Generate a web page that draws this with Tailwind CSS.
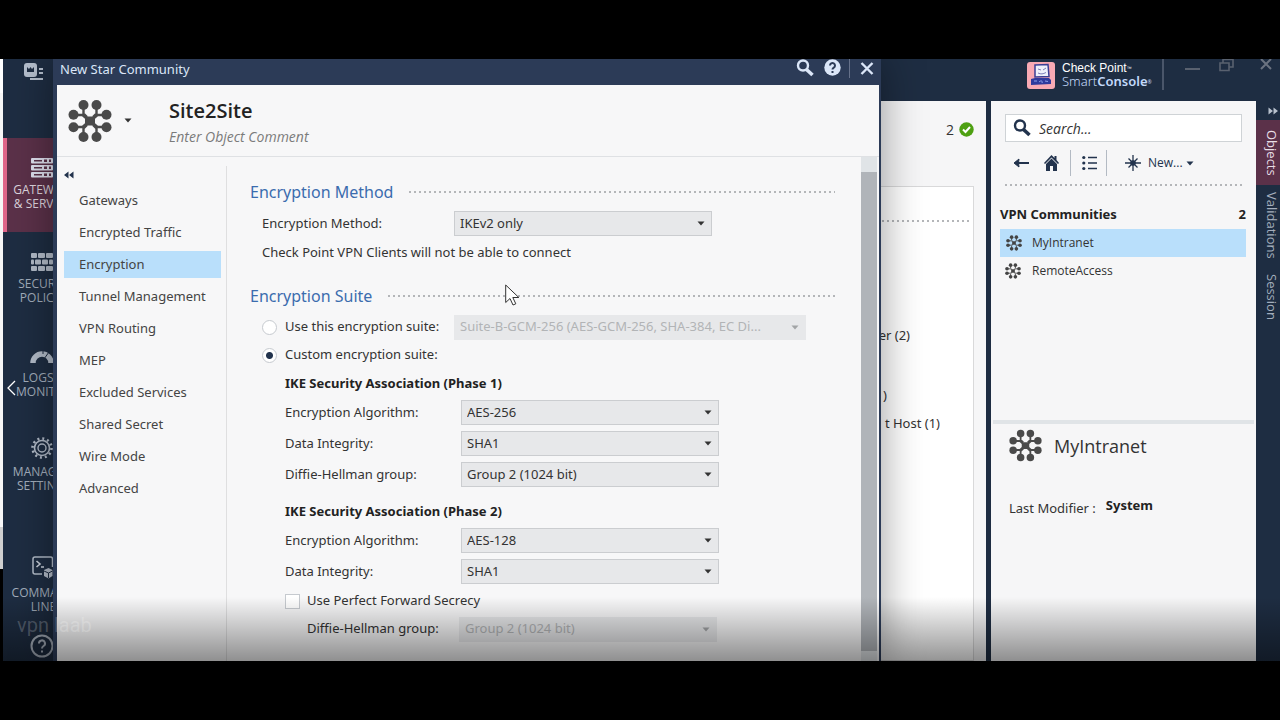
<!DOCTYPE html>
<html lang="en">
<head>
<meta charset="utf-8">
<meta name="viewport" content="width=device-width, initial-scale=1">
<title>New Star Community</title>
<script src="https://cdn.jsdelivr.net/npm/@tailwindcss/browser@4"></script>
</head>
<body class="flex min-h-screen flex-col bg-black font-['Open_Sans','Noto_Sans',sans-serif] text-[13px] text-[#333]">
<svg class="hidden" aria-hidden="true">
  <symbol id="star" viewBox="-22 -22 44 44">
    <g fill="none" stroke="currentColor" stroke-width="2.4">
      <path d="M-6.500-16V-7.500L-3-4M6.500-16V-7.500L3-4M-6.500 16V7.500L-3 4M6.500 16V7.500L3 4M-16.500-6H-7.500L-4-3M16.500-6H7.500L4-3M-16.500 6H-7.500L-4 3M16.500 6H7.500L4 3"/>
    </g>
    <g fill="currentColor">
      <rect x="-5" y="-4.500" width="10" height="9" rx="1"/>
      <circle cx="-6.5" cy="-16" r="5"/><circle cx="6.5" cy="-16" r="5"/><circle cx="-6.5" cy="16" r="5"/><circle cx="6.5" cy="16" r="5"/>
      <circle cx="-16.5" cy="-6.2" r="5"/><circle cx="16.5" cy="-6.2" r="5"/><circle cx="-16.5" cy="6.2" r="5"/><circle cx="16.5" cy="6.2" r="5"/>
    </g>
  </symbol>
  <symbol id="caret" viewBox="0 0 8 5"><path d="M.5.5h7L4 4.5z" fill="currentColor"/></symbol>
  <symbol id="search" viewBox="0 0 18 18"><circle cx="7" cy="6.500" r="5" fill="none" stroke="currentColor" stroke-width="2.400"/><path d="M10.500 10.500L16.500 16" stroke="currentColor" stroke-width="3.600"/></symbol>
  <symbol id="double" viewBox="0 0 10 8"><path d="M0 4L4.500 .5V7.500zM5 4L9.500 .5V7.500z" fill="currentColor"/></symbol>
</svg>

<div class="h-[59px] shrink-0"></div>

<div class="relative flex flex-1 overflow-hidden">
  <div class="flex w-[3px] shrink-0 flex-col">
    <div class="h-[34px] bg-white"></div>
    <div class="h-[434px] bg-[#f7f7f7]"></div>
    <div class="h-[42px] bg-[#cfcfcf]"></div>
  </div>

  <nav class="h-[602px] w-[78px] shrink-0 bg-[#1e2d42] text-[12px] leading-[14px] text-[#a3adbc]">
    <button type="button" aria-label="Menu" class="flex h-[79px] w-full items-start justify-start pt-[4px] pl-[21px]">
      <svg width="22" height="19" viewBox="0 0 22 19" fill="#b5bfcd"><rect width="13" height="14" rx="3"/><path d="M3 4l2 2 1.500-2L8 6l2-2v5H3z" fill="#1e2d42"/><rect x="15" y="5" width="4" height="2"/><rect x="15" y="9" width="4" height="2"/><rect x="6" y="15" width="13" height="2"/></svg>
    </button>
    <a href="#gateways" class="flex h-[94px] flex-col items-center border-l-4 border-[#e0668a] bg-[#5b3149] pt-[18px] pr-1 text-center text-[#ddd5de]">
      <span class="flex h-[24px] items-center"><svg width="22" height="20" viewBox="0 0 22 20" fill="#dfe0ee"><rect width="22" height="5.500" rx="1"/><rect y="7" width="22" height="5.500" rx="1"/><rect y="14" width="22" height="5.500" rx="1"/><path d="M3 2h8v1.500H3zM3 9h8v1.500H3zM3 16h8v1.500H3zM13 1.500h3v2.500h-3zM13 8.500h3v2.500h-3zM13 15.500h3v2.500h-3zM18 1.500h2v2.500h-2zM18 8.500h2v2.500h-2zM18 15.500h2v2.500h-2z" fill="#5b3149"/></svg></span>
      <span class="pt-[3px] pl-[4px]">GATEWAYS<br>&amp; SERVERS</span>
    </a>
    <a href="#policies" class="flex h-[94px] flex-col items-center pt-[18px] text-center">
      <span class="flex h-[24px] items-center"><svg width="22" height="18" viewBox="0 0 22 18" fill="#b3bcc9"><rect width="6" height="5" rx="1"/><rect x="7" width="7" height="5" rx="1"/><rect x="15" width="7" height="5" rx="1"/><rect y="6.500" width="3" height="5" rx="1"/><rect x="4" y="6.500" width="6" height="5" rx="1"/><rect x="11" y="6.500" width="6" height="5" rx="1"/><rect x="18" y="6.500" width="4" height="5" rx="1"/><rect y="13" width="6" height="5" rx="1"/><rect x="7" y="13" width="7" height="5" rx="1"/><rect x="15" y="13" width="7" height="5" rx="1"/></svg></span>
      <span class="pt-[3px] pl-[6px]">SECURITY<br>POLICIES</span>
    </a>
    <a href="#logs" class="flex h-[94px] flex-col items-center pt-[18px] text-center">
      <span class="flex h-[24px] items-center"><svg width="24" height="14" viewBox="0 0 24 14"><path d="M3 14A9 9 0 0 1 21 14" fill="none" stroke="#b3bcc9" stroke-width="5.500"/><path d="M13 0V5M19 3L14 10" stroke="#1e2d42" stroke-width="1"/></svg></span>
      <span class="pt-[3px] pl-[4px]">LOGS &amp;<br>MONITOR</span>
    </a>
    <a href="#manage" class="flex h-[94px] flex-col items-center pt-[16px] text-center">
      <span class="flex h-[24px] items-center"><svg width="24" height="24" viewBox="-12 -12 24 24" fill="none" stroke="#b3bcc9"><circle r="7.500" stroke-width="1.600"/><circle r="4" stroke-width="1.400"/><circle r="9.500" stroke-width="2.600" stroke-dasharray="2 2.974"/></svg></span>
      <span class="pt-[5px] pl-[4px]">MANAGE &amp;<br>SETTINGS</span>
    </a>
    <a href="#cli" class="mt-6 flex h-[94px] flex-col items-center pt-[17px] text-center">
      <span class="flex h-[24px] items-center"><svg width="21" height="23" viewBox="0 0 21 23"><path d="M10 18H3a2 2 0 0 1-2-2V3a2 2 0 0 1 2-2h15.500a2 2 0 0 1 2 2v8" fill="none" stroke="#b3bcc9" stroke-width="1.500"/><path d="M4.500 5L8 8L4.500 11M9 11h3" fill="none" stroke="#c9d0da" stroke-width="1.600"/><path d="M12 14l4.500-2 4 2v6l-4 2.500-4.500-2.500z" fill="#b3bcc9"/><path d="M12 15l4.500 2 4-2M16.500 17v5" stroke="#1e2d42" fill="none"/></svg></span>
      <span class="pt-[7px] pl-[3px]">COMMAND<br>LINE</span>
    </a>
    <button type="button" aria-label="Help" class="mt-[2px] flex w-full justify-center"><svg width="24" height="24" viewBox="0 0 24 24" fill="none" stroke="#b3bcc9"><circle cx="12" cy="12" r="10.500" stroke-width="2"/><path d="M9 9.500a3 3 0 1 1 4.500 2.500c-1.200.7-1.500 1.200-1.500 2.500M12 16.500v2" stroke-width="2"/></svg></button>
  </nav>

  <div class="flex min-w-0 flex-1 flex-col bg-[#1e2d42]">
    <header class="flex h-[42px] shrink-0 items-start justify-end">
      <svg class="mt-[3px]" width="28" height="27" viewBox="0 0 28 27"><rect width="28" height="27" rx="3" fill="#f9aab4"/><path d="M8 3l13-.5 1 12L8 15z" fill="#eef0fb" stroke="#3b3f95" stroke-width="1.500"/><path d="M11 7l3 1M16 8l3-2M11 11c3 1.500 5 1 8-.5" stroke="#7c7fb8" fill="none"/><path d="M4 17l4-1h14l2 2v4l-20 1z" fill="#2f3a9d"/><path d="M7 19h3M12 20c2-2 4-1 3 1M18 19l3 .500" stroke="#8ea0ec" fill="none"/></svg>
      <div class="ml-[7px] w-[100px] whitespace-nowrap pt-[3px] text-white">
        <div class="font-['Liberation_Sans',sans-serif] text-[12px] leading-[13px]">Check Point<sup class="text-[5px]">™</sup></div>
        <div class="font-['Noto_Sans',sans-serif] text-[13px] leading-[13px] text-[#c3d9fa]"><span class="font-light">Smart</span><span class="font-semibold">Console</span><sup class="text-[5px]">®</sup></div>
      </div>
      <div class="h-[31px] w-[2px] bg-[#4a566a]"></div>
      <button type="button" aria-label="Minimize" class="mt-[9px] ml-[21px] h-[2px] w-[15px] bg-[#59616f]"></button>
      <button type="button" aria-label="Restore" class="ml-[19px]"><svg width="15" height="13" viewBox="0 0 15 13" fill="none" stroke="#59616f" stroke-width="1.600"><path d="M1 4h9v7.500H1zM4 4V0M4 .5h10V8h-4"/></svg></button>
      <button type="button" aria-label="Close" class="mr-[8px] ml-[26px]"><svg width="12" height="12" viewBox="0 0 12 12" stroke="#6b7380" stroke-width="2"><path d="M1 0l10 10M11 0L1 10"/></svg></button>
    </header>

    <div class="flex min-h-0 flex-1">
      <main class="flex flex-1 flex-col bg-[#f6f6f7] pr-[12px]">
        <div class="flex h-[57px] items-center justify-end gap-[5px] text-[14px]">2
          <svg width="15" height="15" viewBox="0 0 15 15"><circle cx="7.500" cy="7.500" r="7.200" fill="#4ea012"/><path d="M4 7.500l2.500 2.500 4.500-5" fill="none" stroke="#fff" stroke-width="2"/></svg>
        </div>
        <div class="mt-[28px] flex flex-1 flex-col border border-[#d9d9da] bg-white text-[13px]">
          <div class="mt-[33px] mr-[3px] h-[2px] bg-[repeating-linear-gradient(90deg,#b4b6b9_0_2px,transparent_2px_5px)]"></div>
          <div class="flex flex-col font-['Noto_Sans',sans-serif] leading-[20px]">
            <div class="mt-[103px] pr-[63px] text-right">er (2)</div>
            <div class="mt-[40px] pr-[86px] text-right">)</div>
            <div class="mt-[8px] pr-[33px] text-right">t Host (1)</div>
          </div>
        </div>
      </main>

      <aside class="ml-[5px] flex w-[265px] shrink-0 flex-col bg-[#f6f6f7]">
        <div class="mx-[14px] mt-[13px] flex h-[28px] items-center gap-[8px] border border-[#cfd3d6] bg-white pl-[7px]">
          <svg class="shrink-0 text-[#22334d]" width="18" height="18"><use href="#search"/></svg>
          <input type="text" aria-label="Search" placeholder="Search..." class="w-full min-w-0 text-[14px] italic outline-none placeholder:text-[#333]">
        </div>
        <div class="flex h-[42px] items-center pl-[23px] text-[#22334d]">
          <button type="button" aria-label="Back"><svg width="15" height="10" viewBox="0 0 15 10"><path d="M15 5H4" stroke="currentColor" stroke-width="2"/><path d="M0 5l5-4L4.500 5 5 9z" fill="currentColor" stroke="currentColor"/></svg></button>
          <button type="button" aria-label="Home" class="ml-[15px]"><svg width="15" height="16" viewBox="0 0 15 16" fill="currentColor"><path d="M0 8L7.500 0 10.500 3V1h2v4L15 8l-1 1-6.500-6.500L1 9z"/><path d="M2 9l5.500-5.500L13 9v7H9v-5H6v5H2z"/></svg></button>
          <div class="mx-[11px] h-[26px] w-px bg-[#b3bac3]"></div>
          <button type="button" aria-label="List view"><svg width="15" height="16" viewBox="0 0 15 16" fill="currentColor"><circle cx="1.800" cy="2.500" r="1.600"/><circle cx="1.800" cy="8" r="1.600"/><circle cx="1.800" cy="13.500" r="1.600"/><path d="M6 1.800h9v1.400H6zM6 7.300h9v1.400H6zM6 12.800h9v1.400H6z"/></svg></button>
          <div class="mr-[18px] ml-[9px] h-[26px] w-px bg-[#b3bac3]"></div>
          <button type="button" class="flex items-center text-[12px]"><svg class="mr-[7px]" width="16" height="16" viewBox="-8 -8 16 16"><path d="M0-8V8M-8 0H8M-4.500-4.500L4.500 4.500M4.500-4.500L-4.500 4.500" stroke="currentColor" stroke-width="1.300"/><circle r="2.800" fill="currentColor"/></svg>New...<svg class="ml-[3px]" width="8" height="5"><use href="#caret"/></svg></button>
        </div>
        <div class="mx-[14px] h-[2px] bg-[repeating-linear-gradient(90deg,#b4b6b9_0_2px,transparent_2px_5px)]"></div>
        <div class="flex h-[43px] items-end justify-between pr-[10px] pb-[5px] pl-[9px] font-['Noto_Sans',sans-serif] text-[13px] leading-[20px] font-bold text-[#222]"><h2>VPN Communities</h2><span>2</span></div>
        <ul class="mr-[10px] ml-[9px] text-[12px] leading-[28px]">
          <li class="flex items-center gap-[10px] bg-[#b9dffb] pl-[6px]"><svg class="text-[#444]" width="16" height="16"><use href="#star"/></svg>MyIntranet</li>
          <li class="flex items-center gap-[11px] pl-[5px]"><svg class="text-[#444]" width="16" height="16"><use href="#star"/></svg>RemoteAccess</li>
        </ul>
        <div class="mx-[2px] mt-[135px] h-[4px] bg-[#e0e4e7]"></div>
        <div class="flex items-center gap-[12px] pt-[5px] pl-[18px] text-[18px] leading-[32px] text-[#333]"><svg class="text-[#4a4a4a]" width="33" height="33"><use href="#star"/></svg><h2>MyIntranet</h2></div>
        <div class="flex items-start gap-[10px] pt-[33px] pl-[18px] font-['Noto_Sans',sans-serif] leading-[20px]"><span class="pt-[3px]">Last Modifier :</span><b class="text-[#222]">System</b></div>
      </aside>

      <div class="flex w-[24px] shrink-0 flex-col items-end text-[13px] leading-[16px] text-[#a3adbc]">
        <button type="button" aria-label="Collapse" class="flex h-[19px] items-center pr-[2px]"><svg class="rotate-180 text-[#b8c1cd]" width="10" height="8"><use href="#double"/></svg></button>
        <button type="button" class="flex h-[65px] w-full items-center justify-center bg-[#5b3149] pl-[8px] text-[#e8dfe6]"><span class="[writing-mode:vertical-rl]">Objects</span></button>
        <button type="button" class="flex h-[80px] w-full items-center justify-center pl-[8px]"><span class="[writing-mode:vertical-rl]">Validations</span></button>
        <button type="button" class="flex h-[64px] w-full items-center justify-center pl-[8px]"><span class="[writing-mode:vertical-rl]">Session</span></button>
      </div>
    </div>
  </div>

  <!-- Modal dialog floating over the console window -->
  <section role="dialog" aria-label="New Star Community" class="absolute inset-y-0 right-[399px] left-[53px] flex flex-col border-r-2 border-l-4 border-[#2c3b57] bg-[#f7f7f8] font-['Noto_Sans',sans-serif] shadow-[0_0_40px_rgba(0,0,0,0.4)]">
    <header class="flex h-[26px] shrink-0 items-start bg-[#2c3b57] pr-[5px] text-[#dbe6f8]">
      <h1 class="flex-1 pl-[3px] text-[13px] leading-[20px]">New Star Community</h1>
      <button type="button" aria-label="Search"><svg width="18" height="18"><use href="#search"/></svg></button>
      <button type="button" aria-label="Help" class="ml-[10px]"><svg width="17" height="17" viewBox="0 0 17 17"><circle cx="8.500" cy="8.500" r="8.200" fill="currentColor"/><path d="M6 6.500a2.500 2.500 0 1 1 3.800 2.100C8.800 9.200 8.500 9.500 8.500 10.500M8.500 12v2" fill="none" stroke="#2c3b57" stroke-width="2"/></svg></button>
      <div class="mr-[10px] ml-[8px] h-[19px] w-px bg-[#66718a]"></div>
      <button type="button" aria-label="Close" class="pt-[3px]"><svg width="14" height="13" viewBox="0 0 14 13" stroke="currentColor" stroke-width="2.400"><path d="M1.500 1l11 11M12.500 1l-11 11"/></svg></button>
    </header>

    <div class="flex h-[72px] shrink-0 items-center border-b border-[#dfe1e4] pl-[11px]">
      <svg class="text-[#4a4a4a]" width="44" height="44"><use href="#star"/></svg>
      <button type="button" aria-label="Choose icon" class="ml-[12px]"><svg width="8" height="5"><use href="#caret"/></svg></button>
      <div class="ml-[37px] flex flex-col pt-[5px] font-['Open_Sans',sans-serif]">
        <input type="text" aria-label="Name" value="Site2Site" class="h-[26px] w-[300px] bg-transparent text-[20px] font-semibold text-[#222]">
        <input type="text" aria-label="Comment" placeholder="Enter Object Comment" class="h-[24px] w-[300px] bg-transparent text-[14px] italic placeholder:text-[#7b7b7b]">
      </div>
    </div>

    <div class="flex min-h-0 flex-1">
      <div class="flex w-[170px] shrink-0 flex-col pt-[9px] text-[13px]">
        <div class="flex flex-1 flex-col border-r border-[#dfdfe0] pr-[5px] pl-[7px]">
          <button type="button" aria-label="Collapse" class="flex h-[17px] items-center"><svg class="text-[#22334d]" width="10" height="8"><use href="#double"/></svg></button>
          <nav class="mt-[4px] flex flex-col gap-[5px] leading-[27px] text-[#444]">
            <a href="#a" class="pl-[15px]">Gateways</a>
            <a href="#b" class="pl-[15px]">Encrypted Traffic</a>
            <a href="#c" class="bg-[#b9dffb] pl-[15px]">Encryption</a>
            <a href="#d" class="pl-[15px]">Tunnel Management</a>
            <a href="#e" class="pl-[15px]">VPN Routing</a>
            <a href="#f" class="pl-[15px]">MEP</a>
            <a href="#g" class="pl-[15px]">Excluded Services</a>
            <a href="#h" class="pl-[15px]">Shared Secret</a>
            <a href="#i" class="pl-[15px]">Wire Mode</a>
            <a href="#j" class="pl-[15px]">Advanced</a>
          </nav>
        </div>
      </div>

      <form class="flex min-w-0 flex-1 flex-col pt-[23px] pr-[26px] pl-[23px]">
        <div class="flex h-[24px] items-center gap-[16px]"><h2 class="text-[16px] text-[#3b6cae]">Encryption Method</h2><div class="h-[2px] flex-1 bg-[repeating-linear-gradient(90deg,#b4b6b9_0_2px,transparent_2px_5px)]"></div></div>
        <div class="mt-[4px] flex h-[31px] items-center pl-[12px]">
          <label for="method" class="w-[192px]">Encryption Method:</label>
          <div class="relative w-[258px]"><select id="method" class="h-[25px] w-full appearance-none border border-[#cbcdd0] bg-[#e7e8ea] pl-[5px]"><option>IKEv2 only</option></select><svg class="pointer-events-none absolute top-[10px] right-[7px]" width="8" height="5"><use href="#caret"/></svg></div>
        </div>
        <p class="pl-[12px] leading-[26px]">Check Point VPN Clients will not be able to connect</p>

        <div class="mt-[19px] flex h-[24px] items-center gap-[16px]"><h2 class="text-[16px] text-[#3b6cae]">Encryption Suite</h2><div class="h-[2px] flex-1 bg-[repeating-linear-gradient(90deg,#b4b6b9_0_2px,transparent_2px_5px)]"></div></div>
        <div class="mt-[5px] flex h-[28px] items-center pl-[12px]">
          <label class="flex w-[192px] items-center gap-[8px] whitespace-nowrap"><input type="radio" name="suite" class="size-[15px] appearance-none rounded-full border border-[#c6cacf] bg-white">Use this encryption suite:</label>
          <div class="relative w-[352px]"><select aria-label="Encryption suite" disabled class="h-[25px] w-full appearance-none border border-[#e7e8ea] bg-[#e7e8ea] pl-[5px] text-[#b2b4b6] opacity-100"><option>Suite-B-GCM-256 (AES-GCM-256, SHA-384, EC Di...</option></select><svg class="pointer-events-none absolute top-[10px] right-[7px] text-[#a2a4a6]" width="8" height="5"><use href="#caret"/></svg></div>
        </div>
        <div class="flex h-[28px] items-center pl-[12px]">
          <label class="flex items-center gap-[8px]"><input type="radio" name="suite" checked class="size-[15px] appearance-none rounded-full border border-[#c6cacf] bg-white bg-[radial-gradient(circle,#22334d_3px,transparent_4px)]">Custom encryption suite:</label>
        </div>

        <div class="flex flex-col pl-[35px]">
          <h3 class="leading-[28px] font-bold text-[#222]">IKE Security Association (Phase 1)</h3>
          <div class="flex h-[31px] items-center"><label for="alg1" class="w-[176px]">Encryption Algorithm:</label>
            <div class="relative w-[258px]"><select id="alg1" class="h-[25px] w-full appearance-none border border-[#cbcdd0] bg-[#e7e8ea] pl-[5px]"><option>AES-256</option></select><svg class="pointer-events-none absolute top-[10px] right-[7px]" width="8" height="5"><use href="#caret"/></svg></div></div>
          <div class="flex h-[31px] items-center"><label for="int1" class="w-[176px]">Data Integrity:</label>
            <div class="relative w-[258px]"><select id="int1" class="h-[25px] w-full appearance-none border border-[#cbcdd0] bg-[#e7e8ea] pl-[5px]"><option>SHA1</option></select><svg class="pointer-events-none absolute top-[10px] right-[7px]" width="8" height="5"><use href="#caret"/></svg></div></div>
          <div class="flex h-[31px] items-center"><label for="dh1" class="w-[176px]">Diffie-Hellman group:</label>
            <div class="relative w-[258px]"><select id="dh1" class="h-[25px] w-full appearance-none border border-[#cbcdd0] bg-[#e7e8ea] pl-[5px]"><option>Group 2 (1024 bit)</option></select><svg class="pointer-events-none absolute top-[10px] right-[7px]" width="8" height="5"><use href="#caret"/></svg></div></div>
          <h3 class="mt-[7px] leading-[28px] font-bold text-[#222]">IKE Security Association (Phase 2)</h3>
          <div class="flex h-[31px] items-center"><label for="alg2" class="w-[176px]">Encryption Algorithm:</label>
            <div class="relative w-[258px]"><select id="alg2" class="h-[25px] w-full appearance-none border border-[#cbcdd0] bg-[#e7e8ea] pl-[5px]"><option>AES-128</option></select><svg class="pointer-events-none absolute top-[10px] right-[7px]" width="8" height="5"><use href="#caret"/></svg></div></div>
          <div class="flex h-[31px] items-center"><label for="int2" class="w-[176px]">Data Integrity:</label>
            <div class="relative w-[258px]"><select id="int2" class="h-[25px] w-full appearance-none border border-[#cbcdd0] bg-[#e7e8ea] pl-[5px]"><option>SHA1</option></select><svg class="pointer-events-none absolute top-[10px] right-[7px]" width="8" height="5"><use href="#caret"/></svg></div></div>
          <label class="flex h-[28px] items-center gap-[7px]"><input type="checkbox" class="size-[15px] appearance-none border border-[#c6cacf] bg-white">Use Perfect Forward Secrecy</label>
          <div class="flex h-[28px] items-center pl-[22px]"><label for="dh2" class="w-[152px]">Diffie-Hellman group:</label>
            <div class="relative w-[258px]"><select id="dh2" disabled class="h-[25px] w-full appearance-none border border-[#e7e8ea] bg-[#e7e8ea] pl-[5px] text-[#b2b4b6] opacity-100"><option>Group 2 (1024 bit)</option></select><svg class="pointer-events-none absolute top-[10px] right-[7px] text-[#a2a4a6]" width="8" height="5"><use href="#caret"/></svg></div></div>
        </div>
      </form>

      <div class="mr-[2px] flex w-[16px] shrink-0 flex-col bg-[#e0e4e7] pt-[15px] pb-[10px]"><div class="flex-1 bg-[#b0b4b9]"></div></div>
    </div>
  </section>

  <!-- Video player overlays: bottom shade, channel watermark, previous arrow -->
  <div class="pointer-events-none absolute inset-x-0 bottom-0 h-[64px] bg-linear-to-b from-black/0 to-black/42"></div>
  <div class="pointer-events-none absolute bottom-[24px] left-[17px] font-['Roboto',sans-serif] text-[20px] leading-[24px] text-white/20">vpn laab</div>
  <button type="button" aria-label="Previous" class="absolute top-[321px] left-[7px]"><svg width="9" height="16" viewBox="0 0 9 16" fill="none" stroke="#fff" stroke-width="1.300"><path d="M8 1L1 8l7 7"/></svg></button>
  <svg class="pointer-events-none absolute top-[225px] left-[505px]" width="15" height="22" viewBox="0 0 15 22"><path d="M.7 1v17.500l4.300-4 3 6.500 2.800-1.200-3-6.300h6z" fill="#fff" stroke="#333"/></svg>
</div>

<div class="h-[59px] shrink-0"></div>
</body>
</html>
